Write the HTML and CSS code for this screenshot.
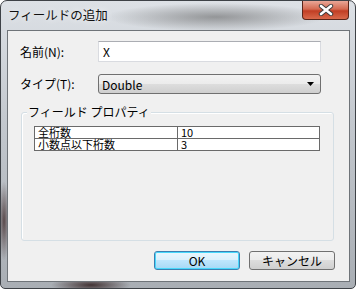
FILE: index.html
```html
<!DOCTYPE html>
<html lang="ja">
<head>
    <meta charset="UTF-8">
    <title>フィールドの追加</title>
    <link rel="stylesheet" href="styles.css">
</head>
<body>
    <div class="window">
        <div class="titlebar">
            <span class="title">フィールドの追加</span>
            <div class="close-btn">
                <svg width="16" height="12" viewBox="0 0 16 12">
                    <path d="M3 2 L13 10 M13 2 L3 10" stroke="#3a3a3a" stroke-width="4.4" stroke-linecap="round"/>
                    <path d="M3 2 L13 10 M13 2 L3 10" stroke="#fff" stroke-width="2.6" stroke-linecap="round"/>
                </svg>
            </div>
        </div>
        <div class="client">
            <div class="form-row first">
                <label for="name">名前(N):</label>
                <div class="textbox" id="name">X</div>
            </div>
            <div class="form-row">
                <label>タイプ(T):</label>
                <div class="combo">
                    <span>Double</span>
                    <svg width="7" height="4" viewBox="0 0 7 4"><path d="M0 0 H7 L3.5 4 Z" fill="#000"/></svg>
                </div>
            </div>
            <div class="group">
                <div class="group-title">フィールド プロパティ</div>
                <table class="props">
                    <tr><td>全桁数</td><td>10</td></tr>
                    <tr><td>小数点以下桁数</td><td>3</td></tr>
                </table>
            </div>
            <div class="buttons">
                <div class="btn default">OK</div>
                <div class="btn">キャンセル</div>
            </div>
        </div>
    </div>
</body>
</html>
```

FILE: styles.css
```css
body {
    margin: 0;
    font-family: "Noto Sans CJK JP", "Noto Sans", sans-serif;
    font-size: 12px;
    color: #000;
}
.window {
    width: 356px;
    height: 289px;
    box-sizing: border-box;
    border: 1px solid #3e4247;
    border-radius: 7px 7px 5px 5px;
    padding: 0 5px 6px 6px;
    display: flex;
    flex-direction: column;
    background:
        radial-gradient(ellipse 110px 14px at 215px 16px, rgba(90, 90, 90, 0.55), rgba(90, 90, 90, 0)),
        radial-gradient(ellipse 40px 8px at 90px 284px, rgba(40, 20, 20, 0.8), rgba(40, 20, 20, 0)),
        radial-gradient(ellipse 6px 40px at 3px 220px, rgba(50, 25, 25, 0.7), rgba(50, 25, 25, 0)),
        linear-gradient(to bottom, #dde1e6, #c4c9cf 40%, #a9aeb4);
}
.titlebar {
    height: 29px;
    display: flex;
    justify-content: space-between;
    align-items: flex-start;
}
.title {
    margin: 7px 0 0 1px;
    line-height: 14px;
    font-size: 12.5px;
    color: #111;
    text-shadow: 0 0 6px rgba(255, 255, 255, 0.9);
}
.close-btn {
    width: 47px;
    height: 19px;
    box-sizing: border-box;
    margin-right: 1px;
    border: 1px solid #5a2519;
    border-top: none;
    border-radius: 0 0 4px 4px;
    background: linear-gradient(to bottom, #e9a797, #d46a51 45%, #c13e24 55%, #d9694b);
    display: flex;
    justify-content: center;
    align-items: center;
}
.client {
    flex: 1;
    background-color: #f0f0f0;
    border: 1px solid #6f7479;
    display: flex;
    flex-direction: column;
    padding: 0 13px 0 12px;
}
.form-row {
    display: flex;
    align-items: center;
    margin-top: 12px;
}
.form-row.first {
    margin-top: 10px;
}
.form-row label {
    width: 78px;
    line-height: 14px;
}
.textbox {
    width: 223px;
    height: 21px;
    box-sizing: border-box;
    background-color: white;
    border: 1px solid #d9dbe0;
    border-top-color: #abadb3;
    padding: 0 4px;
    line-height: 19px;
    font-size: 12px;
}
.combo {
    width: 223px;
    height: 20px;
    box-sizing: border-box;
    border: 1px solid #707070;
    border-radius: 3px;
    background: linear-gradient(to bottom, #f3f3f3, #ebebeb 50%, #dddddd 50%, #cfcfcf);
    display: flex;
    justify-content: space-between;
    align-items: center;
    padding: 0 6px 0 3px;
    font-size: 12px;
}
.group {
    margin: 18px 0 0 1px;
    width: 313px;
    height: 129px;
    box-sizing: border-box;
    border: 1px solid #d5dfe5;
    border-radius: 3px;
    box-shadow: inset 1px 1px 0 #fff;
}
.group-title {
    width: fit-content;
    margin: -8px 0 0 5px;
    padding: 0 1px;
    line-height: 14px;
    background-color: #f0f0f0;
}
.props {
    margin: 7px 0 0 12px;
    width: 286px;
    border-collapse: collapse;
    background-color: white;
    font-size: 11px;
}
.props td {
    border: 1px solid #6a6a6a;
    height: 11px;
    line-height: 11px;
    padding: 0 3px;
}
.props td:first-child {
    width: 136px;
}
.buttons {
    display: flex;
    justify-content: flex-end;
    gap: 9px;
    margin-top: 10px;
    padding-right: 1px;
}
.btn {
    width: 86px;
    height: 19px;
    box-sizing: border-box;
    border: 1px solid #707070;
    border-radius: 3px;
    background: linear-gradient(to bottom, #f2f2f2, #ebebeb 50%, #dddddd 50%, #cfcfcf);
    text-align: center;
    line-height: 17px;
}
.btn.default {
    border-color: #3c7fb1;
    box-shadow: inset 0 0 0 1px #48d8fb;
    background: linear-gradient(to bottom, #eaf6fd, #d9f0fc 50%, #bee6fd 50%, #a7d9f5);
}
```
